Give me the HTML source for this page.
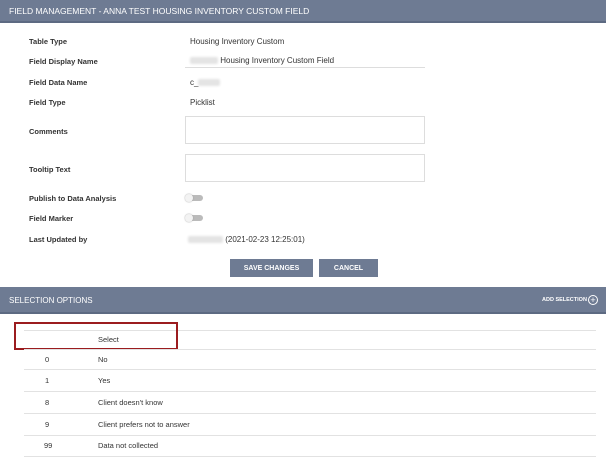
<!DOCTYPE html>
<html><head><style>
*{margin:0;padding:0;box-sizing:border-box}
body{width:606px;height:457px;overflow:hidden;background:#fff;font-family:"Liberation Sans",sans-serif;color:#333;position:relative}
.a{position:absolute}
.hdr{left:0;top:0;width:606px;height:23px;background:#6e7b93;border-bottom:2px solid #5d6a82;color:#fff;font-size:8.5px;padding:6px 0 0 9px}
.l{left:29px;font-size:7.5px;font-weight:bold;color:#333}
.v{left:190px;font-size:8px;color:#333}
.blur{display:inline-block;background:#e4e4e4;height:7px;vertical-align:middle;border-radius:2px;filter:blur(1px)}
.box{left:185px;width:240px;height:28px;border:1px solid #ddd}
.tg{left:185px;width:18px;height:8px}
.tg:before{content:"";position:absolute;left:4px;top:1px;width:14px;height:6px;border-radius:3px;background:#bbb}
.tg:after{content:"";position:absolute;left:0;top:0;width:8px;height:8px;border-radius:50%;background:#f3f3f3;box-shadow:0 0 1.5px #999}
.btn{top:259px;height:18px;background:#6e7b93;color:#fff;font-size:7px;font-weight:bold;text-align:center;line-height:19px}
.bar{left:0;top:287px;width:606px;height:27px;background:#6e7b93;border-bottom:2px solid #5d6a82;color:#fff}
.ln{left:24px;width:572px;height:1px;background:#e2e2e2}
.t{font-size:7.5px;color:#333}
</style></head><body>
<div class="a hdr">FIELD MANAGEMENT - ANNA TEST HOUSING INVENTORY CUSTOM FIELD</div>
<div class="a l" style="top:37px">Table Type</div><div class="a v" style="top:37px">Housing Inventory Custom</div>
<div class="a l" style="top:57px">Field Display Name</div><div class="a v" style="top:56px"><span class="blur" style="width:28px"></span> Housing Inventory Custom Field</div>
<div class="a" style="left:185px;top:67px;width:240px;height:1px;background:#ddd"></div>
<div class="a l" style="top:78px">Field Data Name</div><div class="a v" style="top:78px">c_<span class="blur" style="width:22px"></span></div>
<div class="a l" style="top:98px">Field Type</div><div class="a v" style="top:98px">Picklist</div>
<div class="a l" style="top:127px">Comments</div><div class="a box" style="top:116px"></div>
<div class="a l" style="top:165px">Tooltip Text</div><div class="a box" style="top:154px"></div>
<div class="a l" style="top:194px">Publish to Data Analysis</div><div class="a tg" style="top:194px"></div>
<div class="a l" style="top:214px">Field Marker</div><div class="a tg" style="top:214px"></div>
<div class="a l" style="top:235px">Last Updated by</div><div class="a v" style="top:235px;left:188px"><span class="blur" style="width:35px"></span> (2021-02-23 12:25:01)</div>
<div class="a btn" style="left:230px;width:83px">SAVE CHANGES</div>
<div class="a btn" style="left:319px;width:59px">CANCEL</div>
<div class="a bar"><div class="a" style="left:9px;top:9px;font-size:8px">SELECTION OPTIONS</div>
<div class="a" style="left:542px;top:10px;font-size:5.5px;font-weight:bold;white-space:nowrap">ADD SELECTION</div>
<div class="a" style="left:588px;top:8px;width:10px;height:10px;border:1px solid #fff;border-radius:50%;font-size:9px;line-height:8px;text-align:center">+</div></div>
<div class="a ln" style="top:330px"></div>
<div class="a t" style="left:98px;top:335px">Select</div>
<div class="a" style="left:14px;top:322px;width:164px;height:28px;border:2px solid #9b1c1f"></div>
<div class="a ln" style="top:349px"></div>
<div class="a t" style="left:45px;top:355px">0</div><div class="a t" style="left:98px;top:355px">No</div>
<div class="a ln" style="top:369px"></div>
<div class="a t" style="left:45px;top:376px">1</div><div class="a t" style="left:98px;top:376px">Yes</div>
<div class="a ln" style="top:391px"></div>
<div class="a t" style="left:45px;top:398px">8</div><div class="a t" style="left:98px;top:398px">Client doesn't know</div>
<div class="a ln" style="top:413px"></div>
<div class="a t" style="left:45px;top:420px">9</div><div class="a t" style="left:98px;top:420px">Client prefers not to answer</div>
<div class="a ln" style="top:435px"></div>
<div class="a t" style="left:44px;top:441px">99</div><div class="a t" style="left:98px;top:441px">Data not collected</div>
<div class="a ln" style="top:456px"></div>
</body></html>
